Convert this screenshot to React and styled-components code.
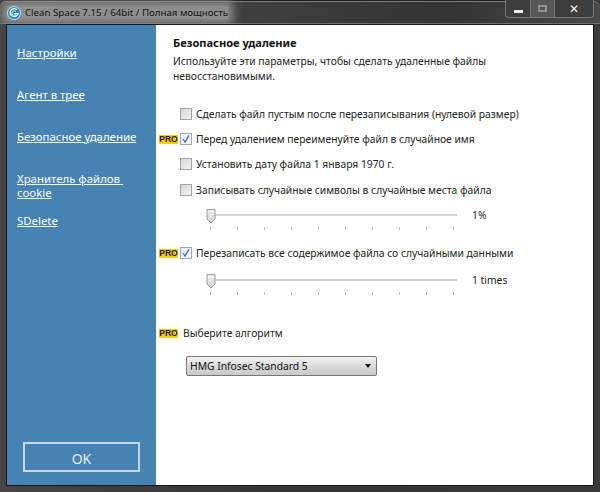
import React from "react";
import styled, { createGlobalStyle } from "styled-components";

const GlobalStyle = createGlobalStyle`
  html, body {
    margin: 0;
    padding: 0;
    background: #2c2c2c;
  }
`;

const TOP_OPTIONS = [
  { label: "Сделать файл пустым после перезаписывания (нулевой размер)", gap: 0 },
  { label: "Перед удалением переименуйте файл в случайное имя", pro: true, checked: true, gap: 11 },
  { label: "Установить дату файла 1 января 1970 г.", gap: 11 },
  { label: "Записывать случайные символы в случайные места файла", gap: 12 },
];

const LINKS = ["Настройки", "Агент в трее", "Безопасное удаление", "Хранитель файлов\u00a0 cookie", "SDelete"];

const Logo = () => (
  <svg width="14" height="14" viewBox="0 0 14 14">
    <circle cx="7" cy="7" r="6.5" fill="#1f86c8" stroke="#bfe3f6" strokeWidth="1" />
    <path d="M10 3.8A4 4 0 1 0 11 7.6H7.2" fill="none" stroke="#fff" strokeWidth="1.4" />
    <path d="M8.6 5.4A2.2 2.2 0 1 0 8.8 8.4" fill="none" stroke="#d5effc" strokeWidth="0.9" />
  </svg>
);

const Tick = () => (
  <svg width="10" height="10" viewBox="0 0 10 10">
    <path d="M2 5L4 8L8 1.4" fill="none" stroke="#4a62b0" strokeWidth="1.3" />
  </svg>
);

const Option = ({ label, pro, checked, gap }) => (
  <OptionRow $gap={gap}>
    <BadgeSlot>{pro && <ProBadge>PRO</ProBadge>}</BadgeSlot>
    <CheckBox $checked={checked}>{checked && <Tick />}</CheckBox>
    <OptionLabel>{label}</OptionLabel>
  </OptionRow>
);

const Slider = ({ value, gap }) => (
  <SliderRow $gap={gap}>
    <SliderBody>
      <Track />
      <Thumb>
        <svg width="10" height="16" viewBox="0 0 10 16">
          <defs>
            <linearGradient id="thumbFill" x1="0" y1="0" x2="0" y2="1">
              <stop offset="0" stopColor="#f4f4f4" />
              <stop offset="1" stopColor="#cfcfcf" />
            </linearGradient>
          </defs>
          <path d="M1 1.5H9V11L5 15L1 11Z" fill="url(#thumbFill)" stroke="#9a9a9a" />
        </svg>
      </Thumb>
      <Ticks>
        {Array.from({ length: 10 }).map((_, i) => (
          <TickMark key={i} />
        ))}
      </Ticks>
    </SliderBody>
    <SliderValue>{value}</SliderValue>
  </SliderRow>
);

const App = () => (
  <>
    <GlobalStyle />
    <Frame>
      <TitleBar>
        <TitleLeft>
          <Logo />
          <TitleText>Clean Space 7.15 / 64bit / Полная мощность</TitleText>
        </TitleLeft>
        <WindowButtons>
          <WinButton $w={24}>
            <MinGlyph />
          </WinButton>
          <WinButton $w={23} $lit>
            <MaxGlyph />
          </WinButton>
          <WinButton $w={38}>
            <CloseGlyph>✕</CloseGlyph>
          </WinButton>
        </WindowButtons>
      </TitleBar>
      <Client>
        <Sidebar>
          <NavList>
            {LINKS.map((l) => (
              <NavLink key={l} href="#">
                {l}
              </NavLink>
            ))}
          </NavList>
          <OkButton>OK</OkButton>
        </Sidebar>
        <Content>
          <Heading>Безопасное удаление</Heading>
          <Description>
            Используйте эти параметры, чтобы сделать удаленные файлы
            <br />
            невосстановимыми.
          </Description>
          <Options>
            {TOP_OPTIONS.map((o) => (
              <Option key={o.label} {...o} />
            ))}
            <Slider value="1%" gap={11} />
            <Option
              label="Перезаписать все содержимое файла со случайными данными"
              pro
              checked
              gap={15}
            />
            <Slider value="1 times" gap={13} />
          </Options>
          <AlgoRow>
            <ProBadge>PRO</ProBadge>
            <AlgoLabel>Выберите алгоритм</AlgoLabel>
          </AlgoRow>
          <Select>
            <span>HMG Infosec Standard 5</span>
            <Caret />
          </Select>
        </Content>
      </Client>
    </Frame>
  </>
);

const FONT = `"Noto Sans", "Liberation Sans", sans-serif`;

const Frame = styled.div`
  box-sizing: border-box;
  width: 600px;
  height: 492px;
  padding: 0 7px 7px 7px;
  display: flex;
  flex-direction: column;
  background: linear-gradient(90deg, #454545 0%, #333 50%, #3a3a3a 100%);
  overflow: hidden;
  font-family: ${FONT};
`;

const TitleBar = styled.div`
  height: 24px;
  flex: none;
  display: flex;
  justify-content: space-between;
  align-items: flex-start;
  margin: 0 -7px 1px;
  padding: 0 6px 0 7px;
  overflow: hidden;
  background: linear-gradient(90deg, #4c4c4c 0%, #3c3c3c 50%, #333 75%, #4a4a4a 100%);
  border-radius: 6px 6px 0 0;
  box-shadow:
    inset 0 1px #1e1e1e,
    inset 0 2px #7c7c7c,
    inset 0 -1px #6e6e6e;
  box-sizing: border-box;
`;

const TitleLeft = styled.div`
  display: flex;
  align-items: center;
  gap: 4px;
  height: 13px;
  margin-top: 6px;
  background: rgba(160, 160, 160, 0.8);
  box-shadow: 0 0 10px 5px rgba(160, 160, 160, 0.8);
`;

const TitleText = styled.span`
  font-size: 9.7px;
  color: #141414;
`;

const WindowButtons = styled.div`
  display: flex;
  height: 17px;
  background: #3d3d3d;
  border: 1px solid #777;
  border-top: none;
  border-radius: 0 0 4px 4px;
`;

const WinButton = styled.div`
  width: ${(p) => p.$w}px;
  display: flex;
  align-items: center;
  justify-content: center;
  background: ${(p) => (p.$lit ? "#575757" : "transparent")};
  border-right: 1px solid #777;
  &:last-child {
    border-right: none;
  }
`;

const MinGlyph = styled.div`
  width: 9px;
  height: 3px;
  margin-top: 5px;
  background: #ececec;
`;

const MaxGlyph = styled.div`
  width: 5px;
  height: 3px;
  border: 2px solid #8f8f8f;
`;

const CloseGlyph = styled.span`
  color: #f2f2f2;
  font-size: 12px;
  font-weight: 700;
  font-family: "DejaVu Sans", sans-serif;
  line-height: 1;
`;

const Client = styled.div`
  flex: 1;
  display: flex;
  min-height: 0;
  background: #fff;
  box-shadow: 0 0 0 1px #161616;
`;

const Sidebar = styled.div`
  width: 149px;
  flex: none;
  background: #4682b4;
  padding: 21px 16px 13px 10px;
  box-sizing: border-box;
  display: flex;
  flex-direction: column;
  justify-content: space-between;
`;

const NavList = styled.div`
  display: grid;
  grid-auto-rows: 42px;
`;

const NavLink = styled.a`
  color: #fff;
  font-size: 11.4px;
  line-height: 14px;
  text-decoration: underline;
  display: block;
`;

const OkButton = styled.button`
  box-sizing: border-box;
  width: 117px;
  height: 30px;
  margin-left: 6px;
  background: transparent;
  border: 2px solid #c4d6e6;
  color: #e6eef5;
  font-family: ${FONT};
  font-size: 14px;
  padding: 2px 0 0;
`;

const Content = styled.div`
  flex: 1;
  padding: 11px 0 0 17px;
  min-width: 0;
`;

const Heading = styled.div`
  font-size: 11.1px;
  font-weight: 700;
  line-height: 14px;
  color: #111;
`;

const Description = styled.div`
  font-size: 10.3px;
  line-height: 15px;
  color: #222;
  margin-top: 4px;
`;

const Options = styled.div`
  margin-top: 23px;
  margin-left: -14px;
`;

const OptionRow = styled.div`
  display: flex;
  align-items: center;
  height: 14px;
  margin-top: ${(p) => p.$gap}px;
`;

const BadgeSlot = styled.div`
  width: 20px;
  flex: none;
  display: flex;
`;

const ProBadge = styled.div`
  width: 19px;
  height: 9px;
  background: #fc0;
  color: #222;
  font-family: "Liberation Sans", sans-serif;
  font-size: 8.5px;
  font-weight: 700;
  line-height: 9px;
  text-align: center;
  flex: none;
`;

const CheckBox = styled.div`
  box-sizing: border-box;
  width: 12px;
  height: 12px;
  flex: none;
  margin-left: 1px;
  border: 1px solid ${(p) => (p.$checked ? "#98a8c4" : "#a4a4a4")};
  background: ${(p) => (p.$checked ? "#f0f4fa" : "linear-gradient(135deg, #d6d6d6, #f2f2f2)")};
  display: flex;
  align-items: center;
  justify-content: center;
`;

const OptionLabel = styled.span`
  font-size: 10.3px;
  color: #222;
  margin-left: 4px;
  white-space: nowrap;
`;

const AlgoLabel = styled(OptionLabel)`
  margin-left: 5px;
`;

const SliderRow = styled.div`
  display: flex;
  align-items: flex-start;
  margin-top: ${(p) => p.$gap}px;
  margin-left: 48px;
`;

const SliderBody = styled.div`
  position: relative;
  width: 250px;
  height: 23px;
`;

const Track = styled.div`
  position: absolute;
  left: 0;
  right: 0;
  top: 6px;
  height: 2px;
  background: #d4d4d4;
`;

const Thumb = styled.div`
  position: absolute;
  left: -1px;
  top: 0;
  line-height: 0;
`;

const Ticks = styled.div`
  position: absolute;
  left: 3px;
  top: 19px;
  width: 244px;
  display: flex;
  justify-content: space-between;
`;

const TickMark = styled.div`
  width: 1px;
  height: 3px;
  background: #bbb;
`;

const SliderValue = styled.div`
  font-size: 10.3px;
  line-height: 14px;
  color: #222;
  margin-left: 15px;
`;

const AlgoRow = styled.div`
  display: flex;
  align-items: center;
  height: 14px;
  margin-top: 30px;
  margin-left: -14px;
`;

const Select = styled.div`
  box-sizing: border-box;
  width: 191px;
  height: 20px;
  margin-top: 16px;
  margin-left: 13px;
  padding: 0 5px 0 3px;
  border: 1px solid #777;
  border-radius: 2px;
  background: linear-gradient(#f2f2f2, #dcdcdc 50%, #c8c8c8);
  display: flex;
  align-items: center;
  justify-content: space-between;
  font-size: 10.3px;
  color: #111;
`;

const Caret = styled.div`
  width: 0;
  height: 0;
  border-left: 3.5px solid transparent;
  border-right: 3.5px solid transparent;
  border-top: 4px solid #111;
`;

export default App;
